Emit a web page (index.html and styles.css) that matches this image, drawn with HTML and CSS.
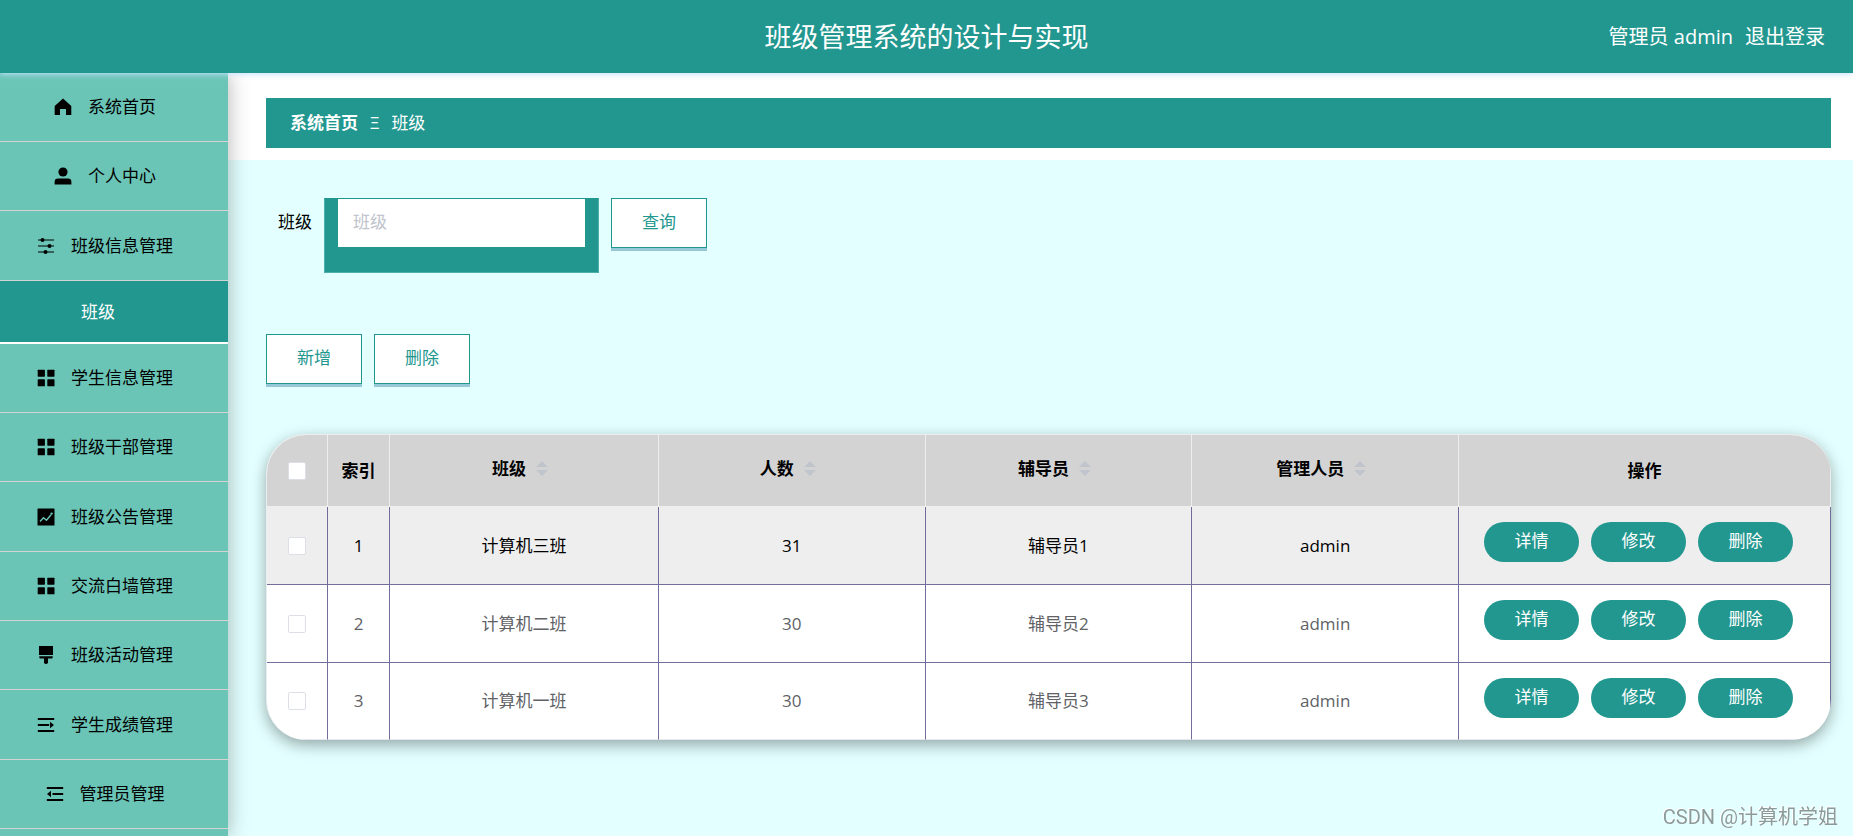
FILE: index.html
```html
<!DOCTYPE html>
<html lang="zh-CN">
<head>
<meta charset="utf-8">
<title>班级管理系统的设计与实现</title>
<link rel="stylesheet" href="styles.css">
</head>
<body>
<svg class="sprite" aria-hidden="true">
  <symbol id="i-home" viewBox="0 0 18 18"><path d="M9 0.5 17.3 8v9H12v-6H6v6H.7V8z"/></symbol>
  <symbol id="i-user" viewBox="0 0 18 18"><circle cx="9" cy="5" r="4.6"/><path d="M.6 17.6v-2.8q0-3.4 3.4-3.4h10q3.4 0 3.4 3.4v2.8z"/></symbol>
  <symbol id="i-sliders" viewBox="0 0 18 18"><path d="M1 2.500h16v1H1zM1 8.500h16v1H1zM1 14.500h16v1H1z"/><circle cx="5.500" cy="3" r="2"/><circle cx="12.500" cy="9" r="2"/><circle cx="8.500" cy="15" r="2"/></symbol>
  <symbol id="i-grid" viewBox="0 0 18 18"><rect x=".7" y=".7" width="7.200" height="7" rx=".6"/><rect x="10.300" y=".7" width="7.200" height="7" rx=".6"/><rect x=".7" y="10.300" width="7.200" height="7" rx=".6"/><rect x="10.300" y="10.300" width="7.200" height="7" rx=".6"/></symbol>
  <symbol id="i-chart" viewBox="0 0 18 18"><rect x=".5" y=".5" width="17" height="17" rx=".5"/><path d="m3 13.500 3.500-3.700 3 2.400 4.500-5.500" fill="none" stroke="#6bc5b7" stroke-width="1.400"/><circle cx="14.600" cy="5.600" r="1.200" fill="#6bc5b7"/></symbol>
  <symbol id="i-brush" viewBox="0 0 18 18"><path d="M2 0h14v9H2zM2.300 10.200h13.400v1.300q0 1-1.200 1H11V17q-2 2-4 0v-4.500H3.500q-1.200 0-1.200-1z"/></symbol>
  <symbol id="i-unfold" viewBox="0 0 18 18"><path d="M.8 2h16.400v2H.8zM.8 8h11.400v2H.8zM.8 14h16.400v2H.8zM13 5.800 17 9l-4 3.200z"/></symbol>
  <symbol id="i-fold" viewBox="0 0 18 18"><path d="M.8 2h16.400v2H.8zM6.500 8h10.700v2H6.500zM.8 14h16.400v2H.8zM5 5.800 1 9l4 3.200z"/></symbol>
  <symbol id="i-sort" viewBox="0 0 12 16"><path d="M6 0l6 6H0zM6 15l6-6H0z"/></symbol>
</svg>

<header class="topbar">
  <h1 class="topbar-title">班级管理系统的设计与实现</h1>
  <div class="topbar-user">
    <span>管理员 <span class="user-name">admin</span></span>
    <a class="logout" href="#">退出登录</a>
  </div>
</header>

<div class="shell">
  <nav class="sidebar">
    <ul class="menu">
      <li class="menu-entry"><a class="menu-link" href="#"><svg class="icon"><use href="#i-home"/></svg>系统首页</a></li>
      <li class="menu-entry"><a class="menu-link" href="#"><svg class="icon"><use href="#i-user"/></svg>个人中心</a></li>
      <li class="menu-entry"><a class="menu-link" href="#"><svg class="icon"><use href="#i-sliders"/></svg>班级信息管理</a>
        <a class="submenu-link" href="#">班级</a></li>
      <li class="menu-entry"><a class="menu-link" href="#"><svg class="icon"><use href="#i-grid"/></svg>学生信息管理</a></li>
      <li class="menu-entry"><a class="menu-link" href="#"><svg class="icon"><use href="#i-grid"/></svg>班级干部管理</a></li>
      <li class="menu-entry"><a class="menu-link" href="#"><svg class="icon"><use href="#i-chart"/></svg>班级公告管理</a></li>
      <li class="menu-entry"><a class="menu-link" href="#"><svg class="icon"><use href="#i-grid"/></svg>交流白墙管理</a></li>
      <li class="menu-entry"><a class="menu-link" href="#"><svg class="icon"><use href="#i-brush"/></svg>班级活动管理</a></li>
      <li class="menu-entry"><a class="menu-link" href="#"><svg class="icon"><use href="#i-unfold"/></svg>学生成绩管理</a></li>
      <li class="menu-entry"><a class="menu-link" href="#"><svg class="icon"><use href="#i-fold"/></svg>管理员管理</a></li>
    </ul>
  </nav>

  <main class="main">
    <div class="crumb-strip">
      <div class="crumbs"><a class="crumb-home" href="#">系统首页</a><span>Ξ</span><span>班级</span></div>
    </div>

    <div class="content">
      <form class="search">
        <label class="search-label" for="class-name">班级</label>
        <div class="search-box"><input class="search-input" id="class-name" type="text" placeholder="班级"></div>
        <button class="btn" type="button">查询</button>
      </form>

      <div class="actions">
        <button class="btn" type="button">新增</button>
        <button class="btn" type="button">删除</button>
      </div>

      <div class="table-card">
        <table class="table">
          <colgroup><col class="col-check"><col class="col-index"><col class="col-name"><col><col><col><col class="col-ops"></colgroup>
          <thead>
            <tr>
              <th><input class="check" type="checkbox" aria-label="全选"></th>
              <th>索引</th>
              <th><span class="sortable">班级<svg class="sort"><use href="#i-sort"/></svg></span></th>
              <th><span class="sortable">人数<svg class="sort"><use href="#i-sort"/></svg></span></th>
              <th><span class="sortable">辅导员<svg class="sort"><use href="#i-sort"/></svg></span></th>
              <th><span class="sortable">管理人员<svg class="sort"><use href="#i-sort"/></svg></span></th>
              <th>操作</th>
            </tr>
          </thead>
          <tbody>
            <tr class="row-hover">
              <td><input class="check" type="checkbox" aria-label="选择第1行"></td><td>1</td><td>计算机三班</td><td>31</td><td>辅导员1</td><td>admin</td>
              <td><div class="ops"><button class="pill" type="button">详情</button><button class="pill" type="button">修改</button><button class="pill" type="button">删除</button></div></td>
            </tr>
            <tr>
              <td><input class="check" type="checkbox" aria-label="选择第2行"></td><td>2</td><td>计算机二班</td><td>30</td><td>辅导员2</td><td>admin</td>
              <td><div class="ops"><button class="pill" type="button">详情</button><button class="pill" type="button">修改</button><button class="pill" type="button">删除</button></div></td>
            </tr>
            <tr>
              <td><input class="check" type="checkbox" aria-label="选择第3行"></td><td>3</td><td>计算机一班</td><td>30</td><td>辅导员3</td><td>admin</td>
              <td><div class="ops"><button class="pill" type="button">详情</button><button class="pill" type="button">修改</button><button class="pill" type="button">删除</button></div></td>
            </tr>
          </tbody>
        </table>
      </div>
    </div>
  </main>
</div>
<div class="watermark">CSDN @计算机学姐</div>
</body>
</html>
```

FILE: styles.css
```css
* { box-sizing: border-box; }

body {
  margin: 0;
  min-height: 100vh;
  display: flex;
  flex-direction: column;
  background: #e3ffff;
  color: #000;
  font: 17px/24px "Open Sans", "Noto Sans CJK SC", sans-serif;
}

a { color: inherit; text-decoration: none; }
button, input { font: inherit; margin: 0; }
.sprite { display: none; }

/* Top bar */
.topbar {
  position: relative;
  z-index: 2;
  display: grid;
  grid-template-columns: 1fr auto 1fr;
  align-items: center;
  height: 73px;
  padding: 0 28px;
  background: #22978f;
  color: #fff;
  box-shadow: 0 1px 6px #c6e2ff;
}
.topbar-title { grid-column: 2; margin: 0; font-size: 27px; line-height: 36px; font-weight: 400; }
.topbar-user { display: flex; justify-content: flex-end; gap: 12px; font-size: 20px; }
.user-name { font-weight: 500; }

.shell { flex: 1; display: flex; }

/* Sidebar */
.sidebar {
  position: relative;
  z-index: 1;
  flex: none;
  width: 228px;
  background: #6bc5b7;
  box-shadow: 0 0 20px rgba(0, 0, 0, .3);
}
.menu { list-style: none; margin: 0; padding: 0; }
.menu-link {
  display: flex;
  align-items: center;
  justify-content: center;
  gap: 16px;
  height: 69px;
  padding-right: 18px;
  border-bottom: 1px solid #d3d3d3;
}
.menu-entry:nth-child(3n) .menu-link { height: 70px; }
.submenu-link {
  display: flex;
  align-items: center;
  justify-content: center;
  height: 63px;
  padding-right: 32px;
  background: #22978f;
  border-bottom: 2px solid #fff;
  color: #fff;
}
.icon { width: 18px; height: 18px; }

/* Breadcrumb */
.main { flex: 1; min-width: 0; }
.crumb-strip { padding: 25px 22px 12px 38px; background: #fff; }
.crumbs {
  display: flex;
  align-items: center;
  gap: 12px;
  height: 50px;
  padding: 0 24px;
  background: #22978f;
  color: #fff;
}
.crumb-home { font-weight: 700; }

/* Search and actions */
.content { padding: 38px 22px 38px 38px; }
.search { display: flex; align-items: flex-start; gap: 12px; padding-left: 12px; }
.search-label { line-height: 48px; }
.search-box {
  width: 275px;
  height: 75px;
  padding: 0 13px;
  background: #22978f;
  border: 1px solid #4fb0a9;
  border-top-color: #22978f;
}
.search-input {
  display: block;
  width: 100%;
  height: 48px;
  padding: 0 15px 3px;
  border: 0;
  background: #fff;
  outline: 0;
}
.search-input::placeholder { color: #c0c4cc; opacity: 1; }
.btn {
  width: 96px;
  height: 50px;
  padding: 0 0 2px;
  border: 1px solid #22978f;
  background: #fff;
  color: #22978f;
  box-shadow: 0 3px 0 #96c8d8;
}
.actions { display: flex; gap: 12px; margin: 61px 0 50px; }

/* Table */
.table-card {
  overflow: hidden;
  border: solid #ebeef0;
  border-width: 1px 0 0 1px;
  border-radius: 40px;
  background: #fff;
  box-shadow: 0 5px 15px rgba(0, 0, 0, .35);
}
.table {
  width: 100%;
  table-layout: fixed;
  border-collapse: separate;
  border-spacing: 0;
  color: #606266;
  text-align: center;
}
.col-check { width: 61px; }
.col-index { width: 62px; }
.col-name { width: 269px; }
.col-ops { width: 372px; }
.table th {
  height: 72px;
  padding: 0;
  background: #d3d3d3;
  border: solid #eee;
  border-width: 0 1px 1px 0;
  color: #000;
  font-weight: 700;
}
.table td {
  height: 78px;
  padding: 0;
  border: solid #716e9c;
  border-width: 0 1px 1px 0;
}
.table tbody tr:last-child td { height: 77px; border-bottom-color: #e4e7f0; }
.row-hover { background: #eee; color: #000; }
.sortable { display: inline-flex; align-items: center; gap: 10px; padding: 0 8px 3px 0; }
.sort { width: 12px; height: 16px; fill: #c0c4cc; }
.check {
  appearance: none;
  display: block;
  width: 18px;
  height: 18px;
  margin: 0 auto;
  border: 1px solid #dcdfe6;
  border-radius: 2px;
  background: #fff;
}
.ops { display: flex; gap: 12px; padding: 0 0 7px 25px; }
.pill {
  width: 95px;
  height: 40px;
  padding: 0 0 2px;
  border: 0;
  border-radius: 20px;
  background: #22978f;
  color: #fff;
}

.watermark {
  position: fixed;
  right: 15px;
  bottom: 7px;
  color: #8d9a9a;
  font: 20px/24px Roboto, "Noto Sans CJK SC", sans-serif;
  text-shadow: -1px -1px 0 #fff;
}
```
